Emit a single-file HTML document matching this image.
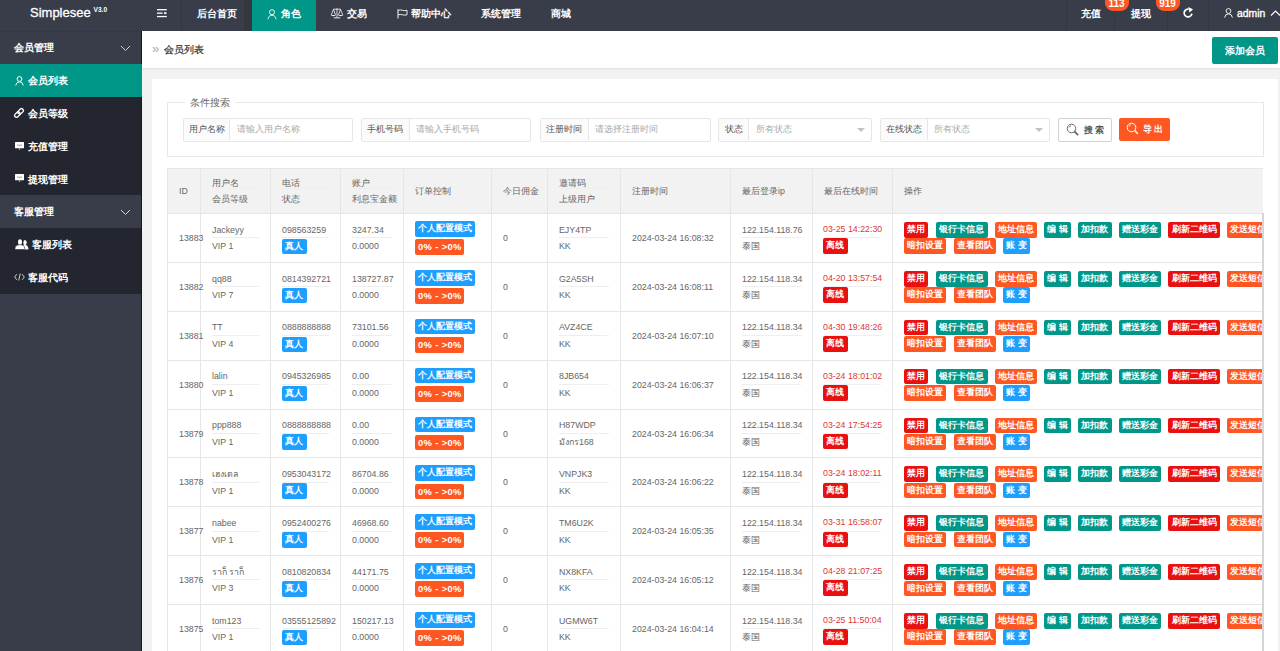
<!DOCTYPE html><html><head><meta charset="utf-8"><title>Simplesee</title><style>
*{box-sizing:border-box}
html,body{margin:0;padding:0;width:1280px;height:651px;overflow:hidden;background:#f2f2f2;font-family:"Liberation Sans",sans-serif;}
.abs{position:absolute}
#hdr{left:0;top:0;width:1280px;height:31px;background:#393d49;}
#hdr .logo{left:0;top:0;width:141px;height:31px;background:#393d49;color:#fff;}
#hdr .logo .n{position:absolute;left:30px;top:5px;font-size:13px;line-height:16px;-webkit-text-stroke:0.3px #fff}
#hdr .logo .v{position:absolute;left:93.5px;top:5.5px;font-size:6.6px;line-height:8px;font-weight:bold}
.nt{color:#fff;font-size:10.2px;line-height:14px;top:7px;white-space:nowrap;font-weight:bold}
.sep{top:0;width:1px;height:31px;background:#343742}
#side{left:0;top:31px;width:142px;height:620px;background:#393d49;}
#sideb{left:140.5px;top:31px;width:1.5px;height:620px;background:#161920}
.si{left:0;width:141px;height:33px;}
.si .tx{position:absolute;color:#fff;font-size:10.2px;line-height:14px;top:10px;white-space:nowrap;font-weight:bold}
.sub{background:#23262e}
#crumb{left:142px;top:31px;width:1138px;height:37px;background:#fff;box-shadow:0 1px 2px rgba(0,0,0,.08)}
#card{left:152px;top:78.5px;width:1126px;height:600px;background:#fff;}
#fs{left:167px;top:102px;width:1097px;height:54.5px;border:1px solid #e8e8e8;}
.lg{left:184.5px;top:96px;background:#fff;padding:0 5px;color:#666;font-size:10.2px;line-height:14px}
.ig{top:118px;height:23.5px;border:1px solid #e6e6e6;border-radius:2px;background:#fff}
.ig .lb{position:absolute;left:0;top:0;height:21px;background:#fbfbfb;border-right:1px solid #e6e6e6;color:#555;font-size:8.5px;line-height:21px;text-align:center;white-space:nowrap}
.ig .ph{position:absolute;top:0;color:#aaa;font-size:8.5px;line-height:21px;white-space:nowrap}
.ig .ar{position:absolute;top:9px;width:0;height:0;border-left:4px solid transparent;border-right:4px solid transparent;border-top:4px solid #c2c2c2}
#tw{left:167px;top:168px;width:1096px;height:483px;overflow:hidden;}
.c{position:absolute;top:0;border-right:1px solid #e6e6e6;height:100%}
.hd{position:absolute;left:0;top:0;width:1300px;background:#f2f2f2;border-top:1px solid #e6e6e6;border-bottom:1px solid #e6e6e6}
.rw{position:absolute;left:0;width:1300px;border-bottom:1px solid #e6e6e6}
.t{position:absolute;color:#666;font-size:8.8px;line-height:12px;white-space:nowrap}
.ln{position:absolute;height:1px;background:#eee}
.bd{position:absolute;height:15.6px;color:#fff;font-size:8.8px;line-height:15.6px;padding:0 3.4px;border-radius:2px;white-space:nowrap;font-weight:bold}
.bt{position:absolute;height:15.6px;color:#fff;font-size:8.8px;line-height:15.6px;padding:0 3.3px;border-radius:2px;white-space:nowrap;font-weight:bold}
.blue{background:#1e9fff}.org{background:#ff5722}.red{background:#e8110f}.grn{background:#009688}
</style></head><body>
<div id="hdr" class="abs">
<div class="logo abs"><span class="n">Simplesee</span><span class="v">V3.0</span></div>
</div>
<div class="abs sep" style="left:181px"></div>
<div class="abs sep" style="left:1066px"></div>
<div class="abs sep" style="left:1114px"></div>
<div class="abs sep" style="left:1167px"></div>
<div class="abs sep" style="left:1208px"></div>
<div class="abs" style="left:244px;top:0;width:8px;height:31px;background:#34373f"></div>
<div class="abs" style="left:252px;top:0;width:64px;height:31px;background:#009688"></div>
<svg class="abs" style="left:156px;top:8px" width="12" height="10" viewBox="0 0 12 10"><rect x="1" y="1.05" width="9.8" height="1.3" fill="#fff"/><rect x="1" y="4.5" width="5.6" height="1.3" fill="#fff"/><rect x="8.1" y="4.2" width="2.3" height="1.9" fill="#fff"/><rect x="1" y="7.9" width="9.8" height="1.3" fill="#fff"/></svg>
<div class="abs nt" style="left:197px">后台首页</div>
<svg class="abs" style="left:267px;top:8.5px" width="10" height="11" viewBox="0 0 10 11"><circle cx="5" cy="3.2" r="2.5" fill="none" stroke="#e8f8f5" stroke-width="1"/><path d="M1 10.2 Q1.6 6.2 5 6.2 Q8.4 6.2 9 10.2" fill="none" stroke="#e8f8f5" stroke-width="1"/></svg>
<div class="abs nt" style="left:280.5px">角色</div>
<svg class="abs" style="left:329.5px;top:8px" width="14" height="11" viewBox="0 0 14 11"><path d="M7 0.3v9.4M3.4 1.2h7.2M3.5 1.4 L1.2 7.2 M3.5 1.4 L5.6 7.2 M10.5 1.4 L8.4 7.2 M10.5 1.4 L12.8 7.2" fill="none" stroke="#fff" stroke-width="0.8"/><path d="M0.8 7.1 H5.9 Q3.4 9.2 0.8 7.1Z M8.1 7.1 H13.2 Q10.6 9.2 8.1 7.1Z" fill="#fff"/><rect x="3.8" y="9.3" width="6.4" height="1.1" fill="#ddd"/></svg>
<div class="abs nt" style="left:347px">交易</div>
<svg class="abs" style="left:396.5px;top:8.5px" width="11" height="10" viewBox="0 0 11 10"><path d="M1 0.3v9.2" stroke="#eee" stroke-width="1.1"/><path d="M1.3 1.3 Q3.5 0.6 5.5 1.3 T10 1.3 V5.8 Q7.8 6.5 5.5 5.8 T1.3 5.8" fill="none" stroke="#eee" stroke-width="1"/></svg>
<div class="abs nt" style="left:410.5px">帮助中心</div>
<div class="abs nt" style="left:480.5px">系统管理</div>
<div class="abs nt" style="left:550.5px">商城</div>
<div class="abs nt" style="left:1080.5px">充值</div>
<div class="abs nt" style="left:1131px">提现</div>
<div class="abs" style="left:1104.5px;top:-7px;width:24px;height:17.5px;border-radius:9px/8px;background:#ff5722;color:#fff;font-size:10px;line-height:22px;text-align:center;font-weight:bold">113</div>
<div class="abs" style="left:1155.5px;top:-7px;width:24px;height:17.5px;border-radius:9px/8px;background:#ff5722;color:#fff;font-size:10px;line-height:22px;text-align:center;font-weight:bold">919</div>
<svg class="abs" style="left:1181.5px;top:7px" width="12" height="12" viewBox="0 0 12 12"><path d="M9.9 6.6 A3.9 3.9 0 1 1 6.6 2.1" fill="none" stroke="#fff" stroke-width="1.7"/><path d="M6.2 0 L11 2.2 L7.6 5.4 Z" fill="#fff"/></svg>
<svg class="abs" style="left:1224px;top:8px" width="9" height="10" viewBox="0 0 9 10"><circle cx="4.5" cy="3" r="2.4" fill="none" stroke="#eee" stroke-width="1"/><path d="M0.6 9.6 Q1.1 5.9 4.5 5.9 Q7.9 5.9 8.4 9.6" fill="none" stroke="#eee" stroke-width="1"/></svg>
<div class="abs nt" style="left:1237px;font-size:10.4px;font-weight:normal;-webkit-text-stroke:0.35px #fff">admin</div>
<svg class="abs" style="left:1270px;top:9px" width="11" height="8" viewBox="0 0 11 8"><path d="M1 6.5 L5.5 2 L10 6.5" fill="none" stroke="#fff" stroke-width="1.1"/></svg>
<div id="side" class="abs"></div><div id="sideb" class="abs"></div>
<div class="abs si" style="top:31px;height:33px;width:140.5px;background:#393d49">
<span class="tx" style="left:14px">会员管理</span>
<svg style="position:absolute;left:120px;top:13.5px" width="11" height="7" viewBox="0 0 11 7"><path d="M1 1 L5.5 5.5 L10 1" fill="none" stroke="#d0d0d0" stroke-width="1"/></svg>
</div>
<div class="abs si" style="top:64px;height:33px;width:142px;background:#009688">
<span class="tx" style="left:28px">会员列表</span>
<svg style="position:absolute;left:14.5px;top:11.5px" width="9" height="10" viewBox="0 0 9 10"><circle cx="4.5" cy="3" r="2.4" fill="none" stroke="#fff" stroke-width="1"/><path d="M0.7 9.5 Q1.4 5.8 4.5 5.8 Q7.6 5.8 8.3 9.5" fill="none" stroke="#fff" stroke-width="1"/></svg>
</div>
<div class="abs si" style="top:97px;height:33px;width:140.5px;background:#23262e">
<span class="tx" style="left:28px">会员等级</span>
<svg style="position:absolute;left:13px;top:10px" width="12" height="12" viewBox="0 0 12 12"><g transform="rotate(-45 6 6)"><rect x="0.6" y="4.1" width="6.2" height="3.8" rx="1.9" fill="none" stroke="#fff" stroke-width="1.3"/><rect x="5.2" y="4.1" width="6.2" height="3.8" rx="1.9" fill="none" stroke="#fff" stroke-width="1.3"/></g></svg>
</div>
<div class="abs si" style="top:130px;height:32.5px;width:140.5px;background:#23262e">
<span class="tx" style="left:28px">充值管理</span>
<svg style="position:absolute;left:14.5px;top:11.5px" width="10" height="9" viewBox="0 0 10 9"><rect x="0" y="0" width="9" height="6.3" rx="0.6" fill="#fff"/><rect x="2" y="2.7" width="5" height="1" fill="#9a9ca3"/><rect x="3.9" y="6.3" width="1.3" height="1.6" fill="#aaa"/></svg>
</div>
<div class="abs si" style="top:162.5px;height:33px;width:140.5px;background:#23262e">
<span class="tx" style="left:28px">提现管理</span>
<svg style="position:absolute;left:14.5px;top:11.5px" width="10" height="9" viewBox="0 0 10 9"><rect x="0" y="0" width="9" height="6.3" rx="0.6" fill="#fff"/><rect x="2" y="2.7" width="5" height="1" fill="#9a9ca3"/><rect x="3.9" y="6.3" width="1.3" height="1.6" fill="#aaa"/></svg>
</div>
<div class="abs si" style="top:195px;height:33px;width:140.5px;background:#393d49">
<span class="tx" style="left:14px">客服管理</span>
<svg style="position:absolute;left:120px;top:13.5px" width="11" height="7" viewBox="0 0 11 7"><path d="M1 1 L5.5 5.5 L10 1" fill="none" stroke="#d0d0d0" stroke-width="1"/></svg>
</div>
<div class="abs si" style="top:228px;height:33px;width:140.5px;background:#23262e">
<span class="tx" style="left:32px">客服列表</span>
<svg style="position:absolute;left:14.5px;top:10.5px" width="14" height="11" viewBox="0 0 14 11"><ellipse cx="10" cy="3.4" rx="1.7" ry="2.5" fill="#fff"/><path d="M8.5 5.6 Q13 6 13.3 9.2 L13.3 10.5 H8.5Z" fill="#fff"/><ellipse cx="5" cy="3.1" rx="2" ry="2.8" fill="#fff"/><path d="M0 10.5 L0 9 Q0.4 6 4.8 5.6 Q9.4 6 9.8 9 L9.8 10.5Z" fill="#fff" stroke="#23262e" stroke-width="0.6"/></svg>
</div>
<div class="abs si" style="top:261px;height:33px;width:140.5px;background:#23262e">
<span class="tx" style="left:28px">客服代码</span>
<svg style="position:absolute;left:14px;top:11.5px" width="11" height="8" viewBox="0 0 11 8"><path d="M2.8 1.2 L0.7 4 L2.8 6.8 M8.2 1.2 L10.3 4 L8.2 6.8 M6.3 0.5 L4.7 7.5" fill="none" stroke="#d0d0d0" stroke-width="1"/></svg>
</div>
<div class="abs" style="left:0;top:31px;width:141px;height:1px;background:#353843"></div>
<div class="abs" style="left:0;top:97px;width:141px;height:1px;background:#1d2027"></div>
<div id="crumb" class="abs"></div>
<div class="abs" style="left:152px;top:42px;color:#aaa;font-size:13px;line-height:14px">&raquo;</div>
<div class="abs" style="left:163.75px;top:43px;color:#333;font-size:10px;line-height:14px;-webkit-text-stroke:0.2px #333">会员列表</div>
<div class="abs" style="left:1211.5px;top:37px;width:66.5px;height:27px;background:#009688;border-radius:2px;color:#fff;font-size:10.2px;line-height:27px;text-align:center;font-weight:bold">添加会员</div>
<div id="card" class="abs"></div>
<div id="fs" class="abs"></div>
<div class="abs lg">条件搜索</div>
<div class="abs ig" style="left:183px;width:170.00px">
<div class="lb" style="width:46.00px">用户名称</div>
<div class="ph" style="left:52.50px">请输入用户名称</div>
</div>
<div class="abs ig" style="left:361px;width:170.00px">
<div class="lb" style="width:47.50px">手机号码</div>
<div class="ph" style="left:54.00px">请输入手机号码</div>
</div>
<div class="abs ig" style="left:539.5px;width:171.00px">
<div class="lb" style="width:48.00px">注册时间</div>
<div class="ph" style="left:54.50px">请选择注册时间</div>
</div>
<div class="abs ig" style="left:718px;width:154.00px">
<div class="lb" style="width:30.00px">状态</div>
<div class="ph" style="left:36.50px">所有状态</div>
<div class="ar" style="left:138.00px"></div>
</div>
<div class="abs ig" style="left:879.5px;width:170.00px">
<div class="lb" style="width:47.00px">在线状态</div>
<div class="ph" style="left:53.50px">所有状态</div>
<div class="ar" style="left:154.00px"></div>
</div>
<div class="abs" style="left:1057.5px;top:118.2px;width:54px;height:23.8px;border:1px solid #d2d2d2;border-radius:2px;background:#fff"></div>
<svg class="abs" style="left:1066px;top:123px" width="13" height="13" viewBox="0 0 13 13"><circle cx="5.5" cy="5.5" r="4.3" fill="none" stroke="#666" stroke-width="1"/><path d="M8.6 8.6 L11.6 11.6" stroke="#666" stroke-width="1.8" stroke-linecap="round"/><path d="M3 4.5 A2.6 2.6 0 0 1 5 2.8" fill="none" stroke="#555" stroke-width="0.8"/></svg>
<div class="abs" style="left:1083.5px;top:123.5px;color:#555;font-size:8.8px;line-height:12px;font-weight:bold">搜 索</div>
<div class="abs" style="left:1119px;top:118.2px;width:51px;height:23.2px;background:#ff5722;border-radius:2px"></div>
<svg class="abs" style="left:1126px;top:122px" width="13" height="13" viewBox="0 0 13 13"><circle cx="5.5" cy="5.5" r="4.3" fill="none" stroke="#fff" stroke-width="1"/><path d="M8.6 8.6 L11.8 11.8" stroke="#fff" stroke-width="1.4"/><path d="M3 4.5 A2.6 2.6 0 0 1 5 2.8" fill="none" stroke="#fff" stroke-width="0.8"/></svg>
<div class="abs" style="left:1142.5px;top:122.5px;color:#fff;font-size:8.8px;line-height:12px;font-weight:bold">导 出</div>
<div id="tw" class="abs">
<div style="position:absolute;left:0;top:0;width:1300px;height:46px;background:#f2f2f2"></div>
<div style="position:absolute;left:0;top:0.00px;width:1300px;height:1px;background:#e6e6e6"></div>
<div style="position:absolute;left:0;top:45.00px;width:1300px;height:1px;background:#e6e6e6"></div>
<div style="position:absolute;left:0;top:94.00px;width:1300px;height:1px;background:#e6e6e6"></div>
<div style="position:absolute;left:0;top:143.00px;width:1300px;height:1px;background:#e6e6e6"></div>
<div style="position:absolute;left:0;top:192.00px;width:1300px;height:1px;background:#e6e6e6"></div>
<div style="position:absolute;left:0;top:241.00px;width:1300px;height:1px;background:#e6e6e6"></div>
<div style="position:absolute;left:0;top:289.00px;width:1300px;height:1px;background:#e6e6e6"></div>
<div style="position:absolute;left:0;top:338.00px;width:1300px;height:1px;background:#e6e6e6"></div>
<div style="position:absolute;left:0;top:387.00px;width:1300px;height:1px;background:#e6e6e6"></div>
<div style="position:absolute;left:0;top:436.00px;width:1300px;height:1px;background:#e6e6e6"></div>
<div style="position:absolute;left:0.00px;top:0;width:1px;height:483px;background:#e6e6e6"></div>
<div style="position:absolute;left:33.00px;top:0;width:1px;height:483px;background:#e6e6e6"></div>
<div style="position:absolute;left:103.00px;top:0;width:1px;height:483px;background:#e6e6e6"></div>
<div style="position:absolute;left:173.00px;top:0;width:1px;height:483px;background:#e6e6e6"></div>
<div style="position:absolute;left:236.00px;top:0;width:1px;height:483px;background:#e6e6e6"></div>
<div style="position:absolute;left:324.00px;top:0;width:1px;height:483px;background:#e6e6e6"></div>
<div style="position:absolute;left:380.00px;top:0;width:1px;height:483px;background:#e6e6e6"></div>
<div style="position:absolute;left:453.00px;top:0;width:1px;height:483px;background:#e6e6e6"></div>
<div style="position:absolute;left:563.00px;top:0;width:1px;height:483px;background:#e6e6e6"></div>
<div style="position:absolute;left:645.00px;top:0;width:1px;height:483px;background:#e6e6e6"></div>
<div style="position:absolute;left:725.00px;top:0;width:1px;height:483px;background:#e6e6e6"></div>
<div class="t" style="left:12.00px;top:16.50px">ID</div>
<div class="t" style="left:45.00px;top:8.80px">用户名</div>
<div class="ln" style="left:45.00px;top:20.00px;width:47.00px"></div>
<div class="t" style="left:45.00px;top:24.60px">会员等级</div>
<div class="t" style="left:115.00px;top:8.80px">电话</div>
<div class="ln" style="left:115.00px;top:20.00px;width:47.00px"></div>
<div class="t" style="left:115.00px;top:24.60px">状态</div>
<div class="t" style="left:185.00px;top:8.80px">账户</div>
<div class="ln" style="left:185.00px;top:20.00px;width:40.00px"></div>
<div class="t" style="left:185.00px;top:24.60px">利息宝金额</div>
<div class="t" style="left:392.00px;top:8.80px">邀请码</div>
<div class="ln" style="left:392.00px;top:20.00px;width:50.00px"></div>
<div class="t" style="left:392.00px;top:24.60px">上级用户</div>
<div class="t" style="left:248.00px;top:16.50px">订单控制</div>
<div class="t" style="left:336.00px;top:16.50px">今日佣金</div>
<div class="t" style="left:465.00px;top:16.50px">注册时间</div>
<div class="t" style="left:575.00px;top:16.50px">最后登录ip</div>
<div class="t" style="left:657.00px;top:16.50px">最后在线时间</div>
<div class="t" style="left:737.00px;top:16.50px">操作</div>
<div class="t" style="left:12.00px;top:64.00px">13883</div>
<div class="t" style="left:45.00px;top:55.50px">Jackeyy</div>
<div class="ln" style="left:45.00px;top:69.00px;width:47.00px"></div>
<div class="t" style="left:45.00px;top:72.30px">VIP 1</div>
<div class="t" style="left:115.00px;top:55.50px">098563259</div>
<div class="ln" style="left:115.00px;top:69.00px;width:47.00px"></div>
<div class="bd blue" style="left:115.00px;top:70.80px">真人</div>
<div class="t" style="left:185.00px;top:55.50px">3247.34</div>
<div class="ln" style="left:185.00px;top:69.00px;width:40.00px"></div>
<div class="t" style="left:185.00px;top:72.30px">0.0000</div>
<div class="bd blue" style="left:248.00px;top:53.00px;padding:0 2.9px">个人配置模式</div>
<div class="bd org" style="left:248.00px;top:71.20px;padding:0 2.6px 0 3px;font-size:9.4px;letter-spacing:0.35px;line-height:16.6px">0% - &gt;0%</div>
<div class="t" style="left:336.00px;top:64.00px">0</div>
<div class="t" style="left:392.00px;top:55.50px">EJY4TP</div>
<div class="ln" style="left:392.00px;top:69.00px;width:50.00px"></div>
<div class="t" style="left:392.00px;top:72.30px">KK</div>
<div class="t" style="left:465.00px;top:64.00px">2024-03-24 16:08:32</div>
<div class="t" style="left:575.00px;top:55.50px">122.154.118.76</div>
<div class="ln" style="left:575.00px;top:69.00px;width:59.00px"></div>
<div class="t" style="left:575.00px;top:72.30px">泰国</div>
<div class="t" style="left:656.00px;top:55.00px;color:#dc3836">03-25 14:22:30</div>
<div class="ln" style="left:657.00px;top:69.00px;width:57.00px"></div>
<div class="bd red" style="left:656.00px;top:70.25px">离线</div>
<div class="bt red" style="left:736.90px;top:54.00px">禁用</div>
<div class="bt grn" style="left:769.10px;top:54.00px">银行卡信息</div>
<div class="bt org" style="left:827.50px;top:54.00px">地址信息</div>
<div class="bt grn" style="left:877.20px;top:54.00px">编 辑</div>
<div class="bt grn" style="left:911.20px;top:54.00px">加扣款</div>
<div class="bt grn" style="left:951.90px;top:54.00px">赠送彩金</div>
<div class="bt red" style="left:1001.40px;top:54.00px">刷新二维码</div>
<div class="bt org" style="left:1060.00px;top:54.00px">发送短信</div>
<div class="bt org" style="left:736.90px;top:70.40px">暗扣设置</div>
<div class="bt org" style="left:786.60px;top:70.40px">查看团队</div>
<div class="bt blue" style="left:836.10px;top:70.40px">账 变</div>
<div class="t" style="left:12.00px;top:113.00px">13882</div>
<div class="t" style="left:45.00px;top:104.50px">qq88</div>
<div class="ln" style="left:45.00px;top:118.00px;width:47.00px"></div>
<div class="t" style="left:45.00px;top:121.30px">VIP 7</div>
<div class="t" style="left:115.00px;top:104.50px">0814392721</div>
<div class="ln" style="left:115.00px;top:118.00px;width:47.00px"></div>
<div class="bd blue" style="left:115.00px;top:119.80px">真人</div>
<div class="t" style="left:185.00px;top:104.50px">138727.87</div>
<div class="ln" style="left:185.00px;top:118.00px;width:40.00px"></div>
<div class="t" style="left:185.00px;top:121.30px">0.0000</div>
<div class="bd blue" style="left:248.00px;top:102.00px;padding:0 2.9px">个人配置模式</div>
<div class="bd org" style="left:248.00px;top:120.20px;padding:0 2.6px 0 3px;font-size:9.4px;letter-spacing:0.35px;line-height:16.6px">0% - &gt;0%</div>
<div class="t" style="left:336.00px;top:113.00px">0</div>
<div class="t" style="left:392.00px;top:104.50px">G2A5SH</div>
<div class="ln" style="left:392.00px;top:118.00px;width:50.00px"></div>
<div class="t" style="left:392.00px;top:121.30px">KK</div>
<div class="t" style="left:465.00px;top:113.00px">2024-03-24 16:08:11</div>
<div class="t" style="left:575.00px;top:104.50px">122.154.118.34</div>
<div class="ln" style="left:575.00px;top:118.00px;width:59.00px"></div>
<div class="t" style="left:575.00px;top:121.30px">泰国</div>
<div class="t" style="left:656.00px;top:104.00px;color:#dc3836">04-20 13:57:54</div>
<div class="ln" style="left:657.00px;top:118.00px;width:57.00px"></div>
<div class="bd red" style="left:656.00px;top:119.25px">离线</div>
<div class="bt red" style="left:736.90px;top:103.00px">禁用</div>
<div class="bt grn" style="left:769.10px;top:103.00px">银行卡信息</div>
<div class="bt org" style="left:827.50px;top:103.00px">地址信息</div>
<div class="bt grn" style="left:877.20px;top:103.00px">编 辑</div>
<div class="bt grn" style="left:911.20px;top:103.00px">加扣款</div>
<div class="bt grn" style="left:951.90px;top:103.00px">赠送彩金</div>
<div class="bt red" style="left:1001.40px;top:103.00px">刷新二维码</div>
<div class="bt org" style="left:1060.00px;top:103.00px">发送短信</div>
<div class="bt org" style="left:736.90px;top:119.40px">暗扣设置</div>
<div class="bt org" style="left:786.60px;top:119.40px">查看团队</div>
<div class="bt blue" style="left:836.10px;top:119.40px">账 变</div>
<div class="t" style="left:12.00px;top:161.86px">13881</div>
<div class="t" style="left:45.00px;top:153.36px">TT</div>
<div class="ln" style="left:45.00px;top:167.00px;width:47.00px"></div>
<div class="t" style="left:45.00px;top:170.16px">VIP 4</div>
<div class="t" style="left:115.00px;top:153.36px">0888888888</div>
<div class="ln" style="left:115.00px;top:167.00px;width:47.00px"></div>
<div class="bd blue" style="left:115.00px;top:168.66px">真人</div>
<div class="t" style="left:185.00px;top:153.36px">73101.56</div>
<div class="ln" style="left:185.00px;top:167.00px;width:40.00px"></div>
<div class="t" style="left:185.00px;top:170.16px">0.0000</div>
<div class="bd blue" style="left:248.00px;top:150.86px;padding:0 2.9px">个人配置模式</div>
<div class="bd org" style="left:248.00px;top:169.06px;padding:0 2.6px 0 3px;font-size:9.4px;letter-spacing:0.35px;line-height:16.6px">0% - &gt;0%</div>
<div class="t" style="left:336.00px;top:161.86px">0</div>
<div class="t" style="left:392.00px;top:153.36px">AVZ4CE</div>
<div class="ln" style="left:392.00px;top:167.00px;width:50.00px"></div>
<div class="t" style="left:392.00px;top:170.16px">KK</div>
<div class="t" style="left:465.00px;top:161.86px">2024-03-24 16:07:10</div>
<div class="t" style="left:575.00px;top:153.36px">122.154.118.34</div>
<div class="ln" style="left:575.00px;top:167.00px;width:59.00px"></div>
<div class="t" style="left:575.00px;top:170.16px">泰国</div>
<div class="t" style="left:656.00px;top:152.86px;color:#dc3836">04-30 19:48:26</div>
<div class="ln" style="left:657.00px;top:167.00px;width:57.00px"></div>
<div class="bd red" style="left:656.00px;top:168.11px">离线</div>
<div class="bt red" style="left:736.90px;top:151.86px">禁用</div>
<div class="bt grn" style="left:769.10px;top:151.86px">银行卡信息</div>
<div class="bt org" style="left:827.50px;top:151.86px">地址信息</div>
<div class="bt grn" style="left:877.20px;top:151.86px">编 辑</div>
<div class="bt grn" style="left:911.20px;top:151.86px">加扣款</div>
<div class="bt grn" style="left:951.90px;top:151.86px">赠送彩金</div>
<div class="bt red" style="left:1001.40px;top:151.86px">刷新二维码</div>
<div class="bt org" style="left:1060.00px;top:151.86px">发送短信</div>
<div class="bt org" style="left:736.90px;top:168.26px">暗扣设置</div>
<div class="bt org" style="left:786.60px;top:168.26px">查看团队</div>
<div class="bt blue" style="left:836.10px;top:168.26px">账 变</div>
<div class="t" style="left:12.00px;top:210.71px">13880</div>
<div class="t" style="left:45.00px;top:202.21px">lalin</div>
<div class="ln" style="left:45.00px;top:216.00px;width:47.00px"></div>
<div class="t" style="left:45.00px;top:219.01px">VIP 1</div>
<div class="t" style="left:115.00px;top:202.21px">0945326985</div>
<div class="ln" style="left:115.00px;top:216.00px;width:47.00px"></div>
<div class="bd blue" style="left:115.00px;top:217.51px">真人</div>
<div class="t" style="left:185.00px;top:202.21px">0.00</div>
<div class="ln" style="left:185.00px;top:216.00px;width:40.00px"></div>
<div class="t" style="left:185.00px;top:219.01px">0.0000</div>
<div class="bd blue" style="left:248.00px;top:199.71px;padding:0 2.9px">个人配置模式</div>
<div class="bd org" style="left:248.00px;top:217.91px;padding:0 2.6px 0 3px;font-size:9.4px;letter-spacing:0.35px;line-height:16.6px">0% - &gt;0%</div>
<div class="t" style="left:336.00px;top:210.71px">0</div>
<div class="t" style="left:392.00px;top:202.21px">8JB654</div>
<div class="ln" style="left:392.00px;top:216.00px;width:50.00px"></div>
<div class="t" style="left:392.00px;top:219.01px">KK</div>
<div class="t" style="left:465.00px;top:210.71px">2024-03-24 16:06:37</div>
<div class="t" style="left:575.00px;top:202.21px">122.154.118.34</div>
<div class="ln" style="left:575.00px;top:216.00px;width:59.00px"></div>
<div class="t" style="left:575.00px;top:219.01px">泰国</div>
<div class="t" style="left:656.00px;top:201.71px;color:#dc3836">03-24 18:01:02</div>
<div class="ln" style="left:657.00px;top:216.00px;width:57.00px"></div>
<div class="bd red" style="left:656.00px;top:216.96px">离线</div>
<div class="bt red" style="left:736.90px;top:200.71px">禁用</div>
<div class="bt grn" style="left:769.10px;top:200.71px">银行卡信息</div>
<div class="bt org" style="left:827.50px;top:200.71px">地址信息</div>
<div class="bt grn" style="left:877.20px;top:200.71px">编 辑</div>
<div class="bt grn" style="left:911.20px;top:200.71px">加扣款</div>
<div class="bt grn" style="left:951.90px;top:200.71px">赠送彩金</div>
<div class="bt red" style="left:1001.40px;top:200.71px">刷新二维码</div>
<div class="bt org" style="left:1060.00px;top:200.71px">发送短信</div>
<div class="bt org" style="left:736.90px;top:217.11px">暗扣设置</div>
<div class="bt org" style="left:786.60px;top:217.11px">查看团队</div>
<div class="bt blue" style="left:836.10px;top:217.11px">账 变</div>
<div class="t" style="left:12.00px;top:259.57px">13879</div>
<div class="t" style="left:45.00px;top:251.07px">ppp888</div>
<div class="ln" style="left:45.00px;top:265.00px;width:47.00px"></div>
<div class="t" style="left:45.00px;top:267.87px">VIP 1</div>
<div class="t" style="left:115.00px;top:251.07px">0888888888</div>
<div class="ln" style="left:115.00px;top:265.00px;width:47.00px"></div>
<div class="bd blue" style="left:115.00px;top:266.37px">真人</div>
<div class="t" style="left:185.00px;top:251.07px">0.00</div>
<div class="ln" style="left:185.00px;top:265.00px;width:40.00px"></div>
<div class="t" style="left:185.00px;top:267.87px">0.0000</div>
<div class="bd blue" style="left:248.00px;top:248.57px;padding:0 2.9px">个人配置模式</div>
<div class="bd org" style="left:248.00px;top:266.77px;padding:0 2.6px 0 3px;font-size:9.4px;letter-spacing:0.35px;line-height:16.6px">0% - &gt;0%</div>
<div class="t" style="left:336.00px;top:259.57px">0</div>
<div class="t" style="left:392.00px;top:251.07px">H87WDP</div>
<div class="ln" style="left:392.00px;top:265.00px;width:50.00px"></div>
<div class="t" style="left:392.00px;top:267.87px">มังกร168</div>
<div class="t" style="left:465.00px;top:259.57px">2024-03-24 16:06:34</div>
<div class="t" style="left:575.00px;top:251.07px">122.154.118.34</div>
<div class="ln" style="left:575.00px;top:265.00px;width:59.00px"></div>
<div class="t" style="left:575.00px;top:267.87px">泰国</div>
<div class="t" style="left:656.00px;top:250.57px;color:#dc3836">03-24 17:54:25</div>
<div class="ln" style="left:657.00px;top:265.00px;width:57.00px"></div>
<div class="bd red" style="left:656.00px;top:265.82px">离线</div>
<div class="bt red" style="left:736.90px;top:249.57px">禁用</div>
<div class="bt grn" style="left:769.10px;top:249.57px">银行卡信息</div>
<div class="bt org" style="left:827.50px;top:249.57px">地址信息</div>
<div class="bt grn" style="left:877.20px;top:249.57px">编 辑</div>
<div class="bt grn" style="left:911.20px;top:249.57px">加扣款</div>
<div class="bt grn" style="left:951.90px;top:249.57px">赠送彩金</div>
<div class="bt red" style="left:1001.40px;top:249.57px">刷新二维码</div>
<div class="bt org" style="left:1060.00px;top:249.57px">发送短信</div>
<div class="bt org" style="left:736.90px;top:265.97px">暗扣设置</div>
<div class="bt org" style="left:786.60px;top:265.97px">查看团队</div>
<div class="bt blue" style="left:836.10px;top:265.97px">账 变</div>
<div class="t" style="left:12.00px;top:308.43px">13878</div>
<div class="t" style="left:45.00px;top:299.93px">เฮงเตล</div>
<div class="ln" style="left:45.00px;top:314.00px;width:47.00px"></div>
<div class="t" style="left:45.00px;top:316.73px">VIP 1</div>
<div class="t" style="left:115.00px;top:299.93px">0953043172</div>
<div class="ln" style="left:115.00px;top:314.00px;width:47.00px"></div>
<div class="bd blue" style="left:115.00px;top:315.23px">真人</div>
<div class="t" style="left:185.00px;top:299.93px">86704.86</div>
<div class="ln" style="left:185.00px;top:314.00px;width:40.00px"></div>
<div class="t" style="left:185.00px;top:316.73px">0.0000</div>
<div class="bd blue" style="left:248.00px;top:297.43px;padding:0 2.9px">个人配置模式</div>
<div class="bd org" style="left:248.00px;top:315.63px;padding:0 2.6px 0 3px;font-size:9.4px;letter-spacing:0.35px;line-height:16.6px">0% - &gt;0%</div>
<div class="t" style="left:336.00px;top:308.43px">0</div>
<div class="t" style="left:392.00px;top:299.93px">VNPJK3</div>
<div class="ln" style="left:392.00px;top:314.00px;width:50.00px"></div>
<div class="t" style="left:392.00px;top:316.73px">KK</div>
<div class="t" style="left:465.00px;top:308.43px">2024-03-24 16:06:22</div>
<div class="t" style="left:575.00px;top:299.93px">122.154.118.34</div>
<div class="ln" style="left:575.00px;top:314.00px;width:59.00px"></div>
<div class="t" style="left:575.00px;top:316.73px">泰国</div>
<div class="t" style="left:656.00px;top:299.43px;color:#dc3836">03-24 18:02:11</div>
<div class="ln" style="left:657.00px;top:314.00px;width:57.00px"></div>
<div class="bd red" style="left:656.00px;top:314.68px">离线</div>
<div class="bt red" style="left:736.90px;top:298.43px">禁用</div>
<div class="bt grn" style="left:769.10px;top:298.43px">银行卡信息</div>
<div class="bt org" style="left:827.50px;top:298.43px">地址信息</div>
<div class="bt grn" style="left:877.20px;top:298.43px">编 辑</div>
<div class="bt grn" style="left:911.20px;top:298.43px">加扣款</div>
<div class="bt grn" style="left:951.90px;top:298.43px">赠送彩金</div>
<div class="bt red" style="left:1001.40px;top:298.43px">刷新二维码</div>
<div class="bt org" style="left:1060.00px;top:298.43px">发送短信</div>
<div class="bt org" style="left:736.90px;top:314.83px">暗扣设置</div>
<div class="bt org" style="left:786.60px;top:314.83px">查看团队</div>
<div class="bt blue" style="left:836.10px;top:314.83px">账 变</div>
<div class="t" style="left:12.00px;top:357.28px">13877</div>
<div class="t" style="left:45.00px;top:348.78px">nabee</div>
<div class="ln" style="left:45.00px;top:363.00px;width:47.00px"></div>
<div class="t" style="left:45.00px;top:365.58px">VIP 1</div>
<div class="t" style="left:115.00px;top:348.78px">0952400276</div>
<div class="ln" style="left:115.00px;top:363.00px;width:47.00px"></div>
<div class="bd blue" style="left:115.00px;top:364.08px">真人</div>
<div class="t" style="left:185.00px;top:348.78px">46968.60</div>
<div class="ln" style="left:185.00px;top:363.00px;width:40.00px"></div>
<div class="t" style="left:185.00px;top:365.58px">0.0000</div>
<div class="bd blue" style="left:248.00px;top:346.28px;padding:0 2.9px">个人配置模式</div>
<div class="bd org" style="left:248.00px;top:364.49px;padding:0 2.6px 0 3px;font-size:9.4px;letter-spacing:0.35px;line-height:16.6px">0% - &gt;0%</div>
<div class="t" style="left:336.00px;top:357.28px">0</div>
<div class="t" style="left:392.00px;top:348.78px">TM6U2K</div>
<div class="ln" style="left:392.00px;top:363.00px;width:50.00px"></div>
<div class="t" style="left:392.00px;top:365.58px">KK</div>
<div class="t" style="left:465.00px;top:357.28px">2024-03-24 16:05:35</div>
<div class="t" style="left:575.00px;top:348.78px">122.154.118.34</div>
<div class="ln" style="left:575.00px;top:363.00px;width:59.00px"></div>
<div class="t" style="left:575.00px;top:365.58px">泰国</div>
<div class="t" style="left:656.00px;top:348.28px;color:#dc3836">03-31 16:58:07</div>
<div class="ln" style="left:657.00px;top:363.00px;width:57.00px"></div>
<div class="bd red" style="left:656.00px;top:363.53px">离线</div>
<div class="bt red" style="left:736.90px;top:347.28px">禁用</div>
<div class="bt grn" style="left:769.10px;top:347.28px">银行卡信息</div>
<div class="bt org" style="left:827.50px;top:347.28px">地址信息</div>
<div class="bt grn" style="left:877.20px;top:347.28px">编 辑</div>
<div class="bt grn" style="left:911.20px;top:347.28px">加扣款</div>
<div class="bt grn" style="left:951.90px;top:347.28px">赠送彩金</div>
<div class="bt red" style="left:1001.40px;top:347.28px">刷新二维码</div>
<div class="bt org" style="left:1060.00px;top:347.28px">发送短信</div>
<div class="bt org" style="left:736.90px;top:363.68px">暗扣设置</div>
<div class="bt org" style="left:786.60px;top:363.68px">查看团队</div>
<div class="bt blue" style="left:836.10px;top:363.68px">账 变</div>
<div class="t" style="left:12.00px;top:406.14px">13876</div>
<div class="t" style="left:45.00px;top:397.64px">ราก็ ราก็</div>
<div class="ln" style="left:45.00px;top:411.00px;width:47.00px"></div>
<div class="t" style="left:45.00px;top:414.44px">VIP 3</div>
<div class="t" style="left:115.00px;top:397.64px">0810820834</div>
<div class="ln" style="left:115.00px;top:411.00px;width:47.00px"></div>
<div class="bd blue" style="left:115.00px;top:412.94px">真人</div>
<div class="t" style="left:185.00px;top:397.64px">44171.75</div>
<div class="ln" style="left:185.00px;top:411.00px;width:40.00px"></div>
<div class="t" style="left:185.00px;top:414.44px">0.0000</div>
<div class="bd blue" style="left:248.00px;top:395.14px;padding:0 2.9px">个人配置模式</div>
<div class="bd org" style="left:248.00px;top:413.34px;padding:0 2.6px 0 3px;font-size:9.4px;letter-spacing:0.35px;line-height:16.6px">0% - &gt;0%</div>
<div class="t" style="left:336.00px;top:406.14px">0</div>
<div class="t" style="left:392.00px;top:397.64px">NX8KFA</div>
<div class="ln" style="left:392.00px;top:411.00px;width:50.00px"></div>
<div class="t" style="left:392.00px;top:414.44px">KK</div>
<div class="t" style="left:465.00px;top:406.14px">2024-03-24 16:05:12</div>
<div class="t" style="left:575.00px;top:397.64px">122.154.118.34</div>
<div class="ln" style="left:575.00px;top:411.00px;width:59.00px"></div>
<div class="t" style="left:575.00px;top:414.44px">泰国</div>
<div class="t" style="left:656.00px;top:397.14px;color:#dc3836">04-28 21:07:25</div>
<div class="ln" style="left:657.00px;top:411.00px;width:57.00px"></div>
<div class="bd red" style="left:656.00px;top:412.39px">离线</div>
<div class="bt red" style="left:736.90px;top:396.14px">禁用</div>
<div class="bt grn" style="left:769.10px;top:396.14px">银行卡信息</div>
<div class="bt org" style="left:827.50px;top:396.14px">地址信息</div>
<div class="bt grn" style="left:877.20px;top:396.14px">编 辑</div>
<div class="bt grn" style="left:911.20px;top:396.14px">加扣款</div>
<div class="bt grn" style="left:951.90px;top:396.14px">赠送彩金</div>
<div class="bt red" style="left:1001.40px;top:396.14px">刷新二维码</div>
<div class="bt org" style="left:1060.00px;top:396.14px">发送短信</div>
<div class="bt org" style="left:736.90px;top:412.54px">暗扣设置</div>
<div class="bt org" style="left:786.60px;top:412.54px">查看团队</div>
<div class="bt blue" style="left:836.10px;top:412.54px">账 变</div>
<div class="t" style="left:12.00px;top:455.00px">13875</div>
<div class="t" style="left:45.00px;top:446.50px">tom123</div>
<div class="ln" style="left:45.00px;top:460.00px;width:47.00px"></div>
<div class="t" style="left:45.00px;top:463.30px">VIP 1</div>
<div class="t" style="left:115.00px;top:446.50px">03555125892</div>
<div class="ln" style="left:115.00px;top:460.00px;width:47.00px"></div>
<div class="bd blue" style="left:115.00px;top:461.80px">真人</div>
<div class="t" style="left:185.00px;top:446.50px">150217.13</div>
<div class="ln" style="left:185.00px;top:460.00px;width:40.00px"></div>
<div class="t" style="left:185.00px;top:463.30px">0.0000</div>
<div class="bd blue" style="left:248.00px;top:444.00px;padding:0 2.9px">个人配置模式</div>
<div class="bd org" style="left:248.00px;top:462.20px;padding:0 2.6px 0 3px;font-size:9.4px;letter-spacing:0.35px;line-height:16.6px">0% - &gt;0%</div>
<div class="t" style="left:336.00px;top:455.00px">0</div>
<div class="t" style="left:392.00px;top:446.50px">UGMW6T</div>
<div class="ln" style="left:392.00px;top:460.00px;width:50.00px"></div>
<div class="t" style="left:392.00px;top:463.30px">KK</div>
<div class="t" style="left:465.00px;top:455.00px">2024-03-24 16:04:14</div>
<div class="t" style="left:575.00px;top:446.50px">122.154.118.34</div>
<div class="ln" style="left:575.00px;top:460.00px;width:59.00px"></div>
<div class="t" style="left:575.00px;top:463.30px">泰国</div>
<div class="t" style="left:656.00px;top:446.00px;color:#dc3836">03-25 11:50:04</div>
<div class="ln" style="left:657.00px;top:460.00px;width:57.00px"></div>
<div class="bd red" style="left:656.00px;top:461.25px">离线</div>
<div class="bt red" style="left:736.90px;top:445.00px">禁用</div>
<div class="bt grn" style="left:769.10px;top:445.00px">银行卡信息</div>
<div class="bt org" style="left:827.50px;top:445.00px">地址信息</div>
<div class="bt grn" style="left:877.20px;top:445.00px">编 辑</div>
<div class="bt grn" style="left:911.20px;top:445.00px">加扣款</div>
<div class="bt grn" style="left:951.90px;top:445.00px">赠送彩金</div>
<div class="bt red" style="left:1001.40px;top:445.00px">刷新二维码</div>
<div class="bt org" style="left:1060.00px;top:445.00px">发送短信</div>
<div class="bt org" style="left:736.90px;top:461.40px">暗扣设置</div>
<div class="bt org" style="left:786.60px;top:461.40px">查看团队</div>
<div class="bt blue" style="left:836.10px;top:461.40px">账 变</div>
</div>
<div class="abs" style="left:1262px;top:213px;width:2px;height:438px;background:#d6d6d6"></div>
</body></html>
